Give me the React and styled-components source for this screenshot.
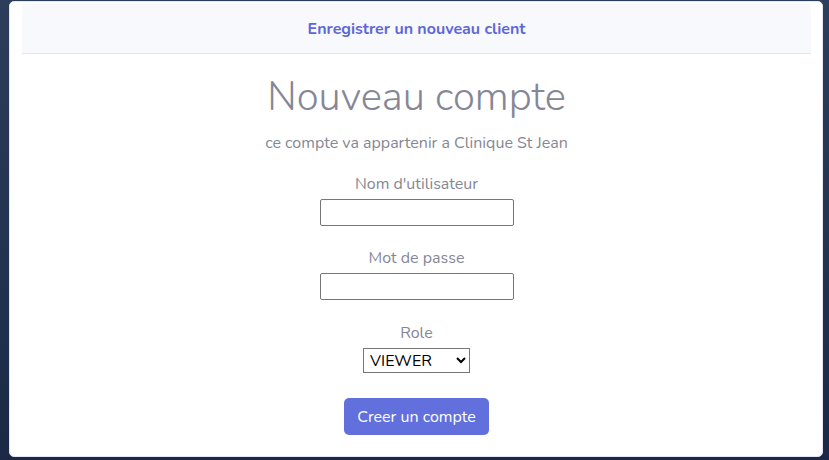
import React from "react";
import styled, { createGlobalStyle } from "styled-components";

const Global = createGlobalStyle`
  html, body { margin: 0; padding: 0; }
  body {
    width: 829px;
    height: 460px;
    overflow: hidden;
    background: linear-gradient(180deg, #2c3e5c 0%, #1b2946 100%);
    font-family: "Nunito", "Lato", "Noto Sans", sans-serif;
  }
`;

const Page = styled.div`
  box-sizing: border-box;
  width: 829px;
  height: 460px;
  padding: 1px 6px 3px 9px;
  display: flex;
`;

const Card = styled.div`
  box-sizing: border-box;
  flex: 1;
  background: #fff;
  border: 1px solid #e3e6f0;
  border-radius: 5px;
  padding: 2px 11px 0 12px;
  display: flex;
  flex-direction: column;
`;

const Header = styled.div`
  height: 49px;
  background: #f8f9fc;
  border-bottom: 1px solid #e3e6f0;
  display: flex;
  align-items: center;
  justify-content: center;
  color: #5d68d6;
  font-weight: 700;
  font-size: 16px;
`;

const Body = styled.form`
  display: flex;
  flex-direction: column;
  align-items: center;
  padding-top: 19px;
`;

const Title = styled.h1`
  margin: 0;
  font-size: 40px;
  font-weight: 300;
  line-height: 48px;
  color: #858796;
`;

const Subtitle = styled.p`
  margin: 11px 0 0;
  font-size: 16px;
  line-height: 22px;
  color: #858796;
`;

const Field = styled.div`
  display: flex;
  flex-direction: column;
  align-items: center;
  margin-top: ${(p) => p.$gap}px;
`;

const Label = styled.label`
  font-size: 16px;
  line-height: 22px;
  color: #858796;
  margin-bottom: 4px;
`;

const Input = styled.input`
  box-sizing: border-box;
  width: 194px;
  height: 27px;
  border: 1px solid #767676;
  border-radius: 2px;
  padding: 1px 2px;
  background: #fff;
`;

const Select = styled.select`
  box-sizing: border-box;
  width: 107px;
  height: 25px;
  border: 1px solid #767676;
  border-radius: 0;
  font-family: "Nunito", "Lato", "Noto Sans", sans-serif;
  font-size: 16px;
  color: #000;
  background: #fff;
  padding: 0 2px;
`;

const Button = styled.button`
  box-sizing: border-box;
  margin-top: 25px;
  width: 145px;
  height: 37px;
  border: none;
  border-radius: 5px;
  background: #6270dd;
  color: #fff;
  font-family: "Nunito", "Lato", "Noto Sans", sans-serif;
  font-size: 16px;
  cursor: pointer;
`;

export default function App() {
  return (
    <>
      <Global />
      <Page>
        <Card>
          <Header>Enregistrer un nouveau client</Header>
          <Body onSubmit={(e) => e.preventDefault()}>
            <Title>Nouveau compte</Title>
            <Subtitle>ce compte va appartenir a Clinique St Jean</Subtitle>
            <Field $gap={19}>
              <Label htmlFor="username">Nom d'utilisateur</Label>
              <Input id="username" type="text" />
            </Field>
            <Field $gap={21}>
              <Label htmlFor="password">Mot de passe</Label>
              <Input id="password" type="password" />
            </Field>
            <Field $gap={22}>
              <Label htmlFor="role">Role</Label>
              <Select id="role" defaultValue="VIEWER">
                <option value="VIEWER">VIEWER</option>
                <option value="EDITOR">EDITOR</option>
                <option value="ADMIN">ADMIN</option>
              </Select>
            </Field>
            <Button type="submit">Creer un compte</Button>
          </Body>
        </Card>
      </Page>
    </>
  );
}
